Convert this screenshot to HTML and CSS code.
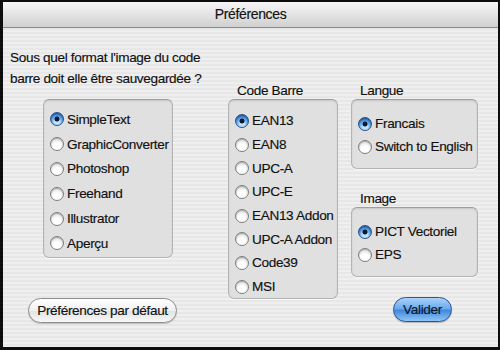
FILE: index.html
```html
<!DOCTYPE html>
<html lang="fr">
<head>
<meta charset="utf-8">
<title>Préférences</title>
<link rel="stylesheet" href="styles.css">
</head>
<body>
<div class="window">
  <div class="titlebar">Préférences</div>
  <div class="content">
    <div class="col col-format">
      <p class="question">Sous quel format l'image du code<br>barre doit elle être sauvegardée ?</p>
      <div class="group group-format">
        <div class="radio-row"><span class="radio on"></span>SimpleText</div>
        <div class="radio-row"><span class="radio"></span>GraphicConverter</div>
        <div class="radio-row"><span class="radio"></span>Photoshop</div>
        <div class="radio-row"><span class="radio"></span>Freehand</div>
        <div class="radio-row"><span class="radio"></span>Illustrator</div>
        <div class="radio-row"><span class="radio"></span>Aperçu</div>
      </div>
      <button class="btn btn-default">Préférences par défaut</button>
    </div>
    <div class="col col-code">
      <div class="label">Code Barre</div>
      <div class="group group-code">
        <div class="radio-row"><span class="radio on"></span>EAN13</div>
        <div class="radio-row"><span class="radio"></span>EAN8</div>
        <div class="radio-row"><span class="radio"></span>UPC-A</div>
        <div class="radio-row"><span class="radio"></span>UPC-E</div>
        <div class="radio-row"><span class="radio"></span>EAN13 Addon</div>
        <div class="radio-row"><span class="radio"></span>UPC-A Addon</div>
        <div class="radio-row"><span class="radio"></span>Code39</div>
        <div class="radio-row"><span class="radio"></span>MSI</div>
      </div>
    </div>
    <div class="col col-right">
      <div class="label">Langue</div>
      <div class="group group-small">
        <div class="radio-row"><span class="radio on"></span>Francais</div>
        <div class="radio-row"><span class="radio"></span>Switch to English</div>
      </div>
      <div class="label label-image">Image</div>
      <div class="group group-small">
        <div class="radio-row"><span class="radio on"></span>PICT Vectoriel</div>
        <div class="radio-row"><span class="radio"></span>EPS</div>
      </div>
      <button class="btn btn-primary">Valider</button>
    </div>
  </div>
</div>
</body>
</html>
```
FILE: styles.css
```css
html, body {
  margin: 0;
  padding: 0;
}
body {
  width: 500px;
  height: 350px;
  overflow: hidden;
  font-family: "Liberation Sans", Arial, sans-serif;
  font-size: 13.6px;
  letter-spacing: -0.35px;
  color: #111;
  -webkit-text-stroke: 0.15px #111;
}
.window {
  box-sizing: border-box;
  width: 500px;
  height: 350px;
  border: 2px solid #0d0d0d;
  border-left-width: 3px;
  border-bottom-width: 3px;
  background: repeating-linear-gradient(to bottom, #efefef 0 2px, #e7e7e7 2px 4px);
  display: flex;
  flex-direction: column;
}
.titlebar {
  height: 26px;
  flex: none;
  background: linear-gradient(#f6f6f6, #d0d0d0);
  border-bottom: 1px solid #8a8a8a;
  display: flex;
  align-items: center;
  justify-content: center;
  padding-bottom: 1px;
  box-sizing: border-box;
  font-size: 14px;
}
.content {
  flex: 1;
  display: flex;
  padding-left: 7px;
}
.col {
  display: flex;
  flex-direction: column;
  align-items: flex-start;
}
.col-format { width: 218px; }
.col-code { width: 123px; }
.col-right { width: 127px; }

.question {
  margin: 19px 0 0 0;
  line-height: 21px;
  white-space: nowrap;
}
.label {
  line-height: 17px;
  margin: 54px 0 0 9px;
}
.label-image { margin-top: 21px; }

.group {
  box-sizing: border-box;
  margin-top: 0;
  background: #e0e0e0;
  border: 1px solid #b4b4b4;
  border-top-color: #9e9e9e;
  border-radius: 6px;
  box-shadow: inset 0 1px 2px rgba(0,0,0,0.12), 0 1px 0 rgba(255,255,255,0.7);
  padding-left: 6px;
}
.group-format {
  margin: 10px 0 0 33px;
  width: 130px;
  height: 159px;
  padding-top: 7px;
}
.group-format .radio-row { height: 24.8px; }
.group-code {
  width: 110px;
  height: 200px;
  padding-top: 9px;
}
.group-code .radio-row { height: 23.7px; }
.group-small {
  width: 127px;
  height: 70px;
  padding-top: 12px;
}
.group-small .radio-row { height: 23px; }

.radio-row {
  display: flex;
  align-items: center;
  gap: 3px;
  white-space: nowrap;
}
.radio {
  box-sizing: border-box;
  width: 14px;
  height: 14px;
  flex: none;
  border-radius: 50%;
  border: 1px solid #7d7d7d;
  background: radial-gradient(circle at 50% 75%, #ffffff 0 35%, #e4e4e4 75%, #cfcfcf);
  box-shadow: inset 0 1px 1px rgba(0,0,0,0.25);
}
.radio.on {
  border-color: #2a4f86;
  background:
    radial-gradient(circle, #0b1a33 0 2.2px, transparent 2.8px),
    radial-gradient(circle at 50% 80%, #bde3ff 0 20%, #4b95e0 60%, #1d5cb0);
  box-shadow: inset 0 1px 1px rgba(0,0,0,0.3);
}

.btn {
  box-sizing: border-box;
  height: 25px;
  border-radius: 13px;
  font: inherit;
  letter-spacing: inherit;
  color: #111;
  padding: 0;
  cursor: default;
  white-space: nowrap;
}
.btn-default {
  margin: 40px 0 0 18px;
  width: 149px;
  border: 1px solid #8d8d8d;
  background: linear-gradient(#ffffff, #f0f0f0 50%, #e2e2e2 51%, #f7f7f7);
  box-shadow: 0 1px 1px rgba(0,0,0,0.2);
}
.btn-primary {
  margin: 20px 0 0 42px;
  width: 59px;
  border: 1px solid #2b5593;
  background: linear-gradient(#a9d2fb, #6aa8ec 48%, #3f86dc 52%, #8ec5f8);
  box-shadow: 0 1px 1px rgba(0,0,0,0.25);
  color: #0c1a30;
}
```
